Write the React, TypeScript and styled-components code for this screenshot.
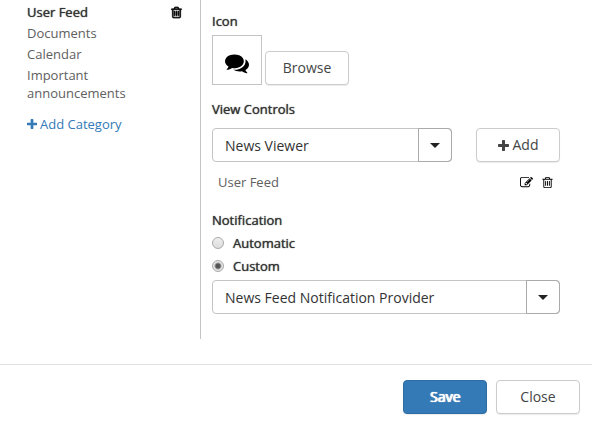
import React from "react";
import styled, { createGlobalStyle, css } from "styled-components";

const GlobalStyle = createGlobalStyle`
  *, *::before, *::after { box-sizing: border-box; }
  body {
    margin: 0;
    background: #fff;
    color: #333;
    font: 13px/18px "Open Sans", "Noto Sans", sans-serif;
  }
`;

const emphasis = css`
  text-shadow: 0 0 1px currentColor;
`;

const Columns = styled.div`
  display: flex;
  align-items: stretch;
`;

const Sidebar = styled.nav`
  flex: 0 0 201px;
  padding: 3px 17px 0 27px;
  border-right: 1px solid #c4c4c4;
`;

const CategoryList = styled.ul`
  list-style: none;
  margin: 0;
  padding: 0;
  display: flex;
  flex-direction: column;
  gap: 3px;
`;

const Category = styled.li<{ $active?: boolean }>`
  display: flex;
  align-items: center;
  justify-content: space-between;
  color: ${(p) => (p.$active ? "#333" : "#606060")};
  ${(p) => p.$active && emphasis}
`;

const CategoryName = styled.span`
  max-width: 120px;
`;

const AddCategory = styled.a`
  display: inline-flex;
  align-items: center;
  gap: 3px;
  margin-top: 13px;
  color: #337ab7;
  text-decoration: none;
`;

const IconButton = styled.button`
  display: flex;
  padding: 0;
  border: 0;
  background: none;
  color: #000;
  cursor: pointer;
`;

const Glyph = styled.svg<{ $heavy?: boolean }>`
  display: block;
  flex: none;
  fill: currentColor;
  stroke: ${(p) => (p.$heavy ? "currentColor" : "none")};
  stroke-width: 90;
`;

const Panel = styled.main`
  flex: 1;
  min-width: 0;
  padding: 12px 32px 25px 11px;
`;

const Heading = styled.label`
  display: block;
  ${emphasis}
`;

const IconRow = styled.div`
  display: flex;
  align-items: flex-end;
  gap: 3px;
  margin: 5px 0 15px;
`;

const IconPreview = styled.div`
  display: flex;
  align-items: center;
  justify-content: center;
  width: 50px;
  height: 50px;
  padding-top: 6px;
  border: 1px solid #c4c4c4;
  color: #000;
`;

const Button = styled.button<{ $primary?: boolean }>`
  display: inline-flex;
  align-items: center;
  justify-content: center;
  gap: 4px;
  flex: none;
  width: 84px;
  height: 34px;
  margin: 0;
  padding: 0;
  border: 1px solid ${(p) => (p.$primary ? "#2e6da4" : "#ccc")};
  border-radius: 4px;
  background: ${(p) => (p.$primary ? "#337ab7" : "#fff")};
  color: ${(p) => (p.$primary ? "#fff" : "#444")};
  font: inherit;
  font-size: 14px;
  box-shadow: 0 1px 1px rgba(0, 0, 0, 0.08);
  text-shadow: ${(p) => (p.$primary ? "0 0 1px #fff, 1px 0 0 #fff" : "none")};
  cursor: pointer;
`;

const ControlRow = styled.div`
  display: flex;
  gap: 24px;
  margin-top: 10px;
`;

const Combo = styled.div`
  flex: 1;
  min-width: 0;
  display: grid;
  grid-template-columns: minmax(0, 1fr) 34px;
`;

const Select = styled.select`
  grid-area: 1 / 1 / 2 / 3;
  appearance: none;
  height: 34px;
  margin: 0;
  padding: 2px 40px 0 12px;
  border: 1px solid #c4c4c4;
  border-radius: 4px;
  background: #fff;
  color: #333;
  font: inherit;
  font-size: 14px;
`;

const ComboArrow = styled.span`
  grid-area: 1 / 2;
  display: flex;
  align-items: center;
  justify-content: center;
  border: 1px solid #aaa;
  border-radius: 0 4px 4px 0;
  pointer-events: none;
  z-index: 1;
  &::after {
    content: "";
    border: 5px solid transparent;
    border-top-color: #222;
    border-bottom: 0;
  }
`;

const ViewItem = styled.div`
  display: flex;
  align-items: center;
  gap: 8px;
  margin: 11px 6px 20px;
  color: #606060;
`;

const ViewName = styled.span`
  flex: 1;
`;

const RadioGroup = styled.fieldset`
  margin: 0;
  padding: 0;
  border: 0;
`;

const Legend = styled.legend`
  padding: 0;
  ${emphasis}
`;

const RadioLabel = styled.label`
  display: flex;
  align-items: center;
  gap: 9px;
  margin-top: 5px;
  ${emphasis}
`;

const Radio = styled.input`
  appearance: none;
  width: 12px;
  height: 12px;
  margin: 0;
  border: 1px solid #aaa;
  border-radius: 50%;
  background: linear-gradient(#eee, #ddd);
  &:checked {
    background: radial-gradient(circle, #555 0 2px, #e6e6e6 4px);
  }
`;

const ProviderRow = styled(ControlRow)`
  margin-top: 5px;
`;

const Footer = styled.footer`
  display: flex;
  justify-content: flex-end;
  gap: 9px;
  margin-top: 25px;
  padding: 15px 12px 14px;
  border-top: 1px solid #e0e0e0;
`;

const paths = {
  plus: "M1600 736v192q0 40-28 68t-68 28h-416v416q0 40-28 68t-68 28h-192q-40 0-68-28t-28-68v-416h-416q-40 0-68-28t-28-68v-192q0-40 28-68t68-28h416v-416q0-40 28-68t68-28h192q40 0 68 28t28 68v416h416q40 0 68 28t28 68z",
  trash:
    "M704 736v576q0 14-9 23t-23 9h-64q-14 0-23-9t-9-23v-576q0-14 9-23t23-9h64q14 0 23 9t9 23zm256 0v576q0 14-9 23t-23 9h-64q-14 0-23-9t-9-23v-576q0-14 9-23t23-9h64q14 0 23 9t9 23zm256 0v576q0 14-9 23t-23 9h-64q-14 0-23-9t-9-23v-576q0-14 9-23t23-9h64q14 0 23 9t9 23zm128 724v-948h-896v948q0 22 7 40.5t14.5 27 10.5 8.5h832q3 0 10.5-8.5t14.5-27 7-40.5zm-672-1076h448l-48-117q-7-9-17-11h-317q-10 2-17 11zm928 32v64q0 14-9 23t-23 9h-96v948q0 83-47 143.5t-113 60.5h-832q-66 0-113-58.5t-47-141.5v-952h-96q-14 0-23-9t-9-23v-64q0-14 9-23t23-9h309l70-167q15-37 54-63t79-26h320q40 0 79 26t54 63l70 167h309q14 0 23 9t9 23z",
  edit: "M888 1184l116-116-152-152-116 116v56h96v96h56zm440-720q-16-16-33 1l-350 350q-17 17-1 33t33-1l350-350q17-17 1-33zm80 594v190q0 119-84.5 203.5t-203.5 84.5h-832q-119 0-203.5-84.5t-84.5-203.5v-832q0-119 84.5-203.5t203.5-84.5h832q63 0 117 25 15 7 18 23 3 17-9 29l-49 49q-14 14-32 8-23-6-45-6h-832q-66 0-113 47t-47 113v832q0 66 47 113t113 47h832q66 0 113-47t47-113v-126q0-13 9-22l64-64q15-15 35-7t20 29zm-96-738l288 288-672 672h-288v-288zm444 132l-92 92-288-288 92-92q28-28 68-28t68 28l152 152q28 28 28 68t-28 68z",
  comments:
    "M1408 768q0 139-94 257t-256.5 186.5-353.5 68.5q-86 0-176-16-124 88-278 128-36 9-86 16h-3q-11 0-20.5-8t-11.5-21q-1-3-1-6.5t.5-6.5 2-6l2.5-5 3.5-5.5 4-5 4.5-5 4-4.5q5-6 23-25t26-29.5 22.5-29 25-38.5 20.5-44q-124-72-195-177t-71-224q0-139 94-257t256.5-186.5 353.5-68.5 353.5 68.5 256.5 186.5 94 257zm384 256q0 120-71 224.5t-195 176.5q10 24 20.5 44t25 38.5 22.5 29 26 29.5 23 25q1 1 4 4.5t4.5 5 4 5 3.5 5.5l2.5 5 2 6 .5 6.5-1 6.5q-3 14-13 22t-22 7q-50-7-86-16-154-40-278-128-90 16-176 16-271 0-472-132 58 4 88 4 161 0 309-45t264-129q125-92 192-212t67-254q0-77-23-152 129 71 204 178t75 230z",
};

function Icon({ name, size, heavy }: { name: keyof typeof paths; size: number; heavy?: boolean }) {
  const box = name === "plus" ? "192 128 1408 1408" : "0 0 1792 1792";
  return (
    <Glyph viewBox={box} width={size} height={size} $heavy={heavy} aria-hidden="true">
      <path d={paths[name]} />
    </Glyph>
  );
}

function ComboBox({ id, label, value }: { id: string; label?: string; value: string }) {
  return (
    <Combo>
      <Select id={id} aria-label={label} defaultValue={value}>
        <option>{value}</option>
      </Select>
      <ComboArrow />
    </Combo>
  );
}

export default function App() {
  return (
    <>
      <GlobalStyle />
      <Columns>
        <Sidebar>
          <CategoryList>
            <Category $active>
              <CategoryName>User Feed</CategoryName>
              <IconButton aria-label="Delete category">
                <Icon name="trash" size={13} heavy />
              </IconButton>
            </Category>
            <Category>Documents</Category>
            <Category>Calendar</Category>
            <Category>
              <CategoryName>Important announcements</CategoryName>
            </Category>
          </CategoryList>
          <AddCategory href="#add-category">
            <Icon name="plus" size={10} />
            Add Category
          </AddCategory>
        </Sidebar>
        <Panel>
          <Heading as="div">Icon</Heading>
          <IconRow>
            <IconPreview>
              <Icon name="comments" size={24} />
            </IconPreview>
            <Button type="button">Browse</Button>
          </IconRow>
          <Heading htmlFor="view-control">View Controls</Heading>
          <ControlRow>
            <ComboBox id="view-control" value="News Viewer" />
            <Button type="button">
              <Icon name="plus" size={11} />
              Add
            </Button>
          </ControlRow>
          <ViewItem>
            <ViewName>User Feed</ViewName>
            <IconButton aria-label="Edit view">
              <Icon name="edit" size={13} />
            </IconButton>
            <IconButton aria-label="Delete view">
              <Icon name="trash" size={13} />
            </IconButton>
          </ViewItem>
          <RadioGroup>
            <Legend>Notification</Legend>
            <RadioLabel>
              <Radio type="radio" name="notification" />
              Automatic
            </RadioLabel>
            <RadioLabel>
              <Radio type="radio" name="notification" defaultChecked />
              Custom
            </RadioLabel>
          </RadioGroup>
          <ProviderRow>
            <ComboBox id="provider" label="Notification provider" value="News Feed Notification Provider" />
          </ProviderRow>
        </Panel>
      </Columns>
      <Footer>
        <Button type="submit" $primary>
          Save
        </Button>
        <Button type="button">Close</Button>
      </Footer>
    </>
  );
}
